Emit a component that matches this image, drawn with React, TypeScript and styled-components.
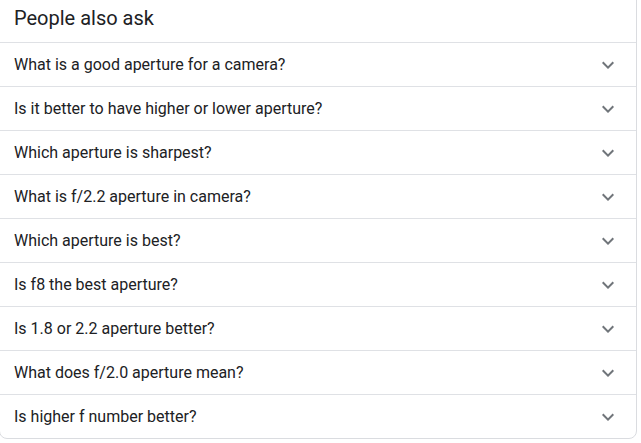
import React from 'react';
import styled, { createGlobalStyle } from 'styled-components';

const questions = [
  'What is a good aperture for a camera?',
  'Is it better to have higher or lower aperture?',
  'Which aperture is sharpest?',
  'What is f/2.2 aperture in camera?',
  'Which aperture is best?',
  'Is f8 the best aperture?',
  'Is 1.8 or 2.2 aperture better?',
  'What does f/2.0 aperture mean?',
  'Is higher f number better?',
];

export default function App() {
  return (
    <>
      <GlobalStyle />
      <Card>
        <Title>People also ask</Title>
        {questions.map((q) => (
          <Row key={q}>
            <Question>{q}</Question>
            <Chevron viewBox="0 0 24 24">
              <path d="M16.59 8.59L12 13.17 7.41 8.59 6 10l6 6 6-6z" />
            </Chevron>
          </Row>
        ))}
      </Card>
    </>
  );
}

const GlobalStyle = createGlobalStyle`
  body {
    margin: 0;
    background: #fff;
    font-family: Roboto, "Liberation Sans", Arial, sans-serif;
  }
`;

const Card = styled.div`
  margin: -8px 4px 0 -1px;
  border: 1px solid #dadce0;
  border-radius: 8px;
  background: #fff;
`;

const Title = styled.div`
  height: 49px;
  box-sizing: border-box;
  padding: 11px 0 0 14px;
  font-size: 20px;
  line-height: 28px;
  color: #202124;
`;

const Row = styled.div`
  display: flex;
  align-items: center;
  height: 44px;
  box-sizing: border-box;
  border-top: 1px solid #dfe1e5;
  padding: 0 16px 0 14px;
  cursor: pointer;
`;

const Question = styled.div`
  flex: 1;
  font-size: 16px;
  line-height: 24px;
  color: #202124;
  padding-top: 1px;
`;

const Chevron = styled.svg`
  width: 24px;
  height: 24px;
  fill: #70757a;
`;
